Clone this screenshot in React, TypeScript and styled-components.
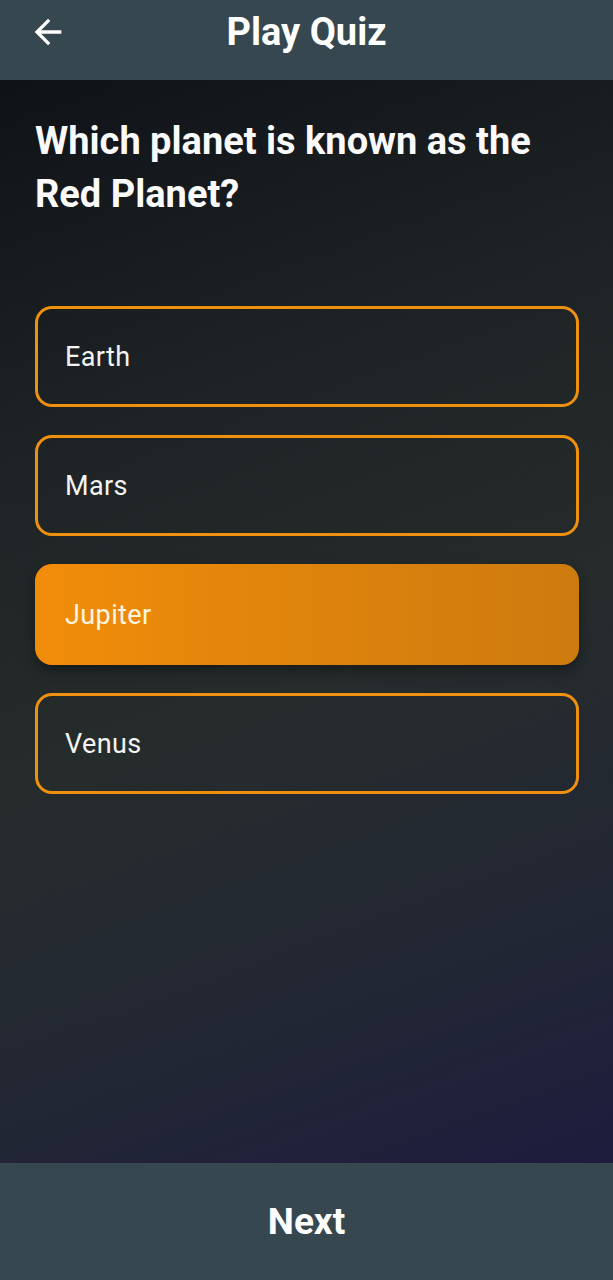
import React from "react";
import styled, { createGlobalStyle } from "styled-components";

const Global = createGlobalStyle`
  html, body { margin: 0; padding: 0; background: #1c2126; }
  * { box-sizing: border-box; }
  #root { height: 1280px; }
`;

const Screen = styled.div`
  width: 613px;
  height: 1280px;
  display: flex;
  flex-direction: column;
  font-family: Roboto, "Noto Sans", sans-serif;
  color: #fff;
  overflow: hidden;
`;

const Header = styled.header`
  height: 80px;
  flex: 0 0 80px;
  background: #37474f;
  display: flex;
  align-items: center;
  position: relative;
  justify-content: center;
`;

const BackButton = styled.button`
  position: absolute;
  left: 28px;
  top: 12px;
  width: 40px;
  height: 40px;
  border: none;
  background: transparent;
  padding: 0;
  display: flex;
  align-items: center;
  justify-content: center;
  color: #fff;
`;

const Title = styled.h1`
  margin: 0;
  margin-top: -17px;
  font-size: 38px;
  font-weight: 700;
  letter-spacing: 0;
`;

const Body = styled.main`
  flex: 1;
  background: linear-gradient(160deg, #0f1318 0%, #1e2325 30%, #262c2c 55%, #222734 80%, #1d1d3e 100%);
  padding: 35px 35px 0 35px;
  display: flex;
  flex-direction: column;
`;

const Question = styled.h2`
  margin: 0;
  font-size: 38px;
  line-height: 53px;
  font-weight: 700;
  color: #fafafa;
`;

const Options = styled.div`
  display: flex;
  flex-direction: column;
  gap: 28px;
  margin-top: 85px;
  width: 544px;
`;

const Option = styled.button<{ $selected?: boolean }>`
  height: 101px;
  border-radius: 17px;
  display: flex;
  align-items: center;
  font-family: Roboto, "Noto Sans", sans-serif;
  font-size: 27px;
  font-weight: 400;
  letter-spacing: 0.4px;
  text-align: left;
  cursor: pointer;
  border: ${(p) => (p.$selected ? "none" : "3px solid #f0900f")};
  padding: 0 0 0 ${(p) => (p.$selected ? "30px" : "27px")};
  color: ${(p) => (p.$selected ? "#fff6e0" : "#f3f3f3")};
  background: ${(p) =>
    p.$selected ? "linear-gradient(90deg, #f28d0a 0%, #e0840c 45%, #cd7a0f 100%)" : "transparent"};
  box-shadow: ${(p) => (p.$selected ? "0 6px 12px rgba(0,0,0,0.35)" : "none")};
`;

const Footer = styled.footer`
  height: 117px;
  flex: 0 0 117px;
  background: #37474f;
  display: flex;
  align-items: center;
  justify-content: center;
`;

const NextText = styled.span`
  font-size: 37px;
  font-weight: 700;
  color: #fff;
`;

const options = ["Earth", "Mars", "Jupiter", "Venus"];

export default function App() {
  return (
    <>
      <Global />
      <Screen>
        <Header>
          <BackButton aria-label="Back">
            <svg width="40" height="40" viewBox="0 0 24 24" fill="#fff">
              <path d="M20 11H7.83l5.59-5.59L12 4l-8 8 8 8 1.41-1.41L7.83 13H20v-2z" />
            </svg>
          </BackButton>
          <Title>Play Quiz</Title>
        </Header>
        <Body>
          <Question>
            Which planet is known as the
            <br />
            Red Planet?
          </Question>
          <Options>
            {options.map((o) => (
              <Option key={o} $selected={o === "Jupiter"}>
                {o}
              </Option>
            ))}
          </Options>
        </Body>
        <Footer>
          <NextText>Next</NextText>
        </Footer>
      </Screen>
    </>
  );
}
